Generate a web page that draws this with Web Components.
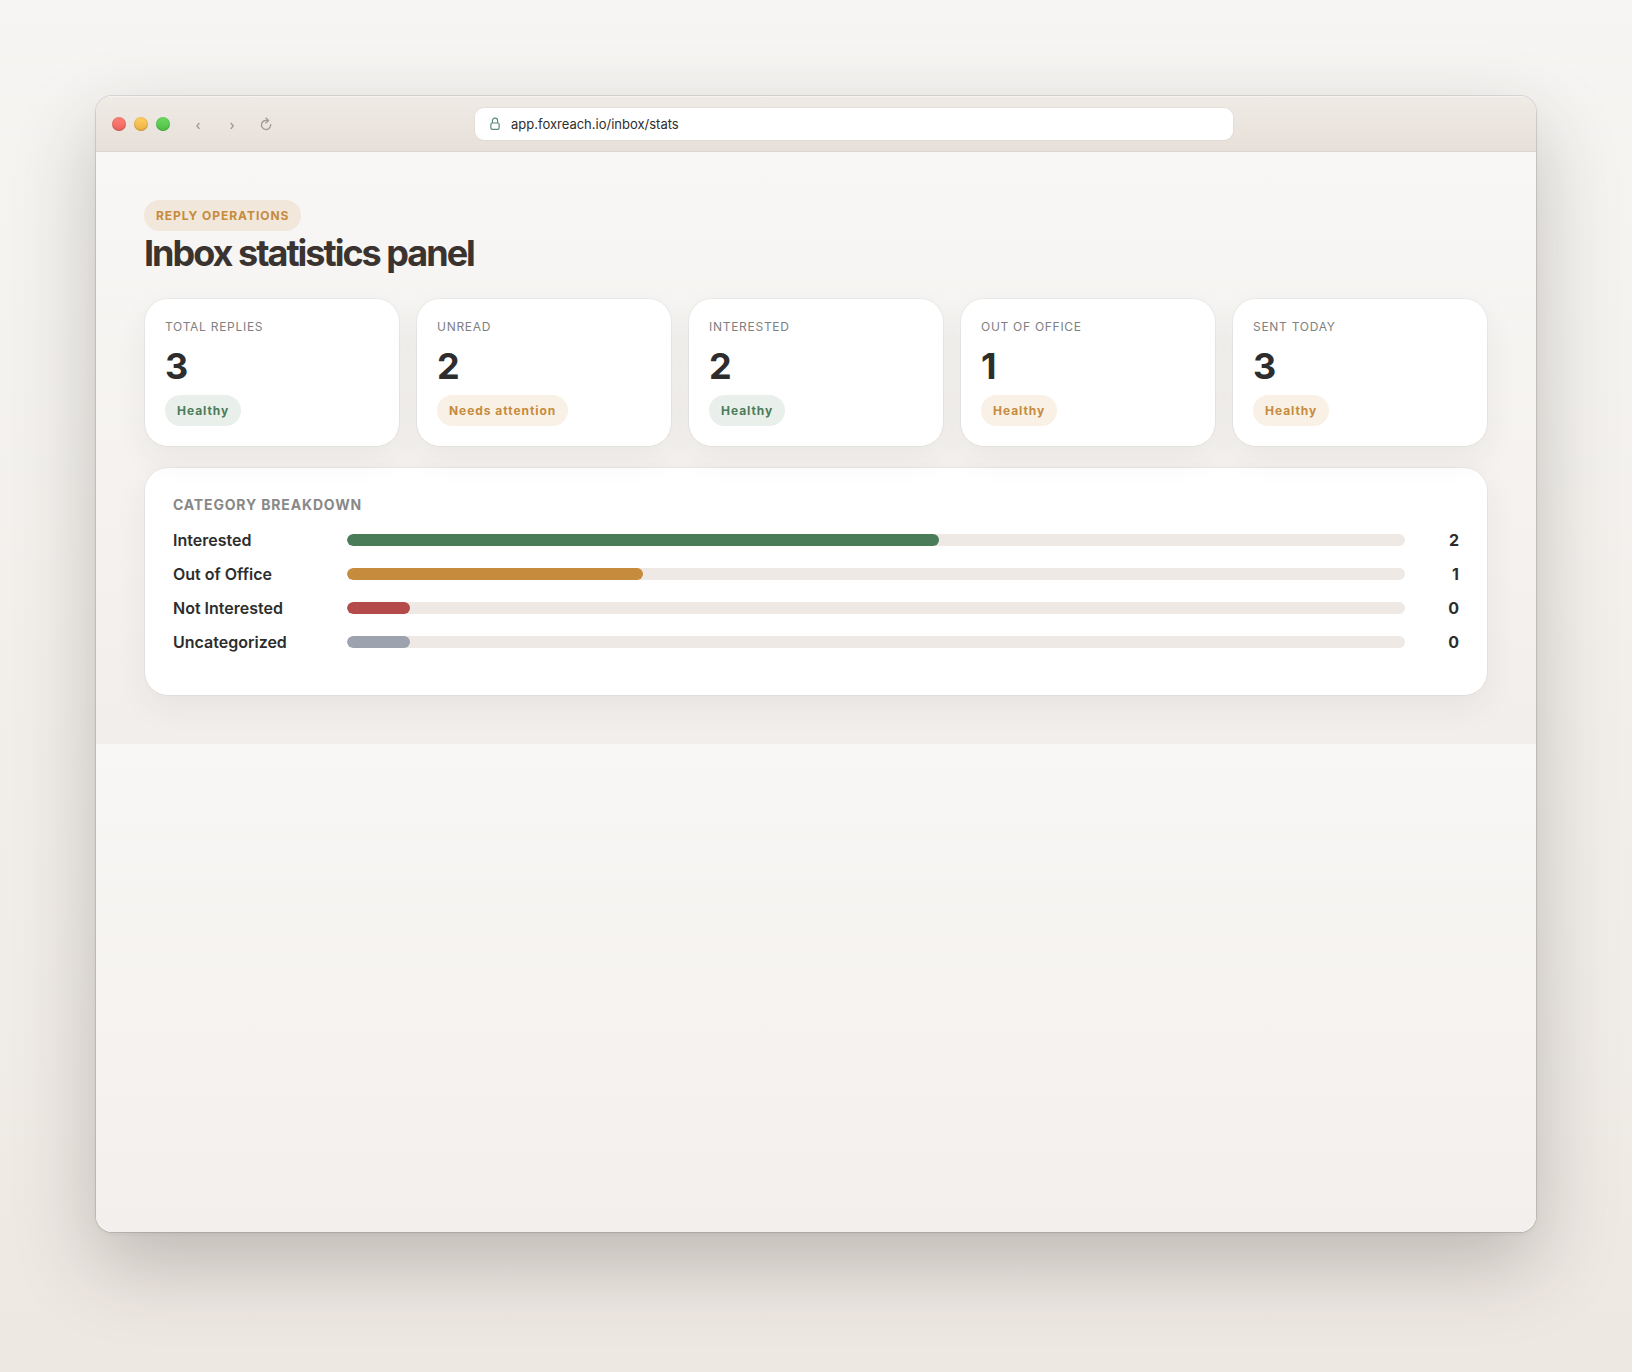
<!DOCTYPE html>
<html lang="en">
<head>
<meta charset="utf-8">
<meta name="viewport" content="width=device-width, initial-scale=1">
<title>Inbox statistics panel</title>
<style>
  * {
    box-sizing: border-box;
  }
  body {
    margin: 0;
    min-height: 100vh;
    display: flex;
    padding: 96px 96px 140px;
    font-family: Inter, "Liberation Sans", sans-serif;
    color: #2d2d2d;
    background: linear-gradient(180deg, #f6f5f3 0%, #f2efeb 50%, #ede8e1 100%);
  }
</style>
</head>
<body>
<browser-window address="app.foxreach.io/inbox/stats">
  <stats-page heading="Inbox statistics panel" tag="Reply operations">
    <stat-card slot="cards" label="Total replies" value="3"><status-pill tone="good">Healthy</status-pill></stat-card>
    <stat-card slot="cards" label="Unread" value="2"><status-pill tone="warn">Needs attention</status-pill></stat-card>
    <stat-card slot="cards" label="Interested" value="2"><status-pill tone="good">Healthy</status-pill></stat-card>
    <stat-card slot="cards" label="Out of office" value="1"><status-pill tone="warn">Healthy</status-pill></stat-card>
    <stat-card slot="cards" label="Sent today" value="3"><status-pill tone="warn">Healthy</status-pill></stat-card>
    <breakdown-panel heading="Category breakdown">
      <breakdown-row label="Interested" value="2" percent="56" color="#4a7c59"></breakdown-row>
      <breakdown-row label="Out of Office" value="1" percent="28" color="#c68b3c"></breakdown-row>
      <breakdown-row label="Not Interested" value="0" percent="6" color="#b54a4a"></breakdown-row>
      <breakdown-row label="Uncategorized" value="0" percent="6" color="#9ca3af"></breakdown-row>
    </breakdown-panel>
  </stats-page>
</browser-window>

<script>
function makeTemplate(html) {
  const template = document.createElement('template');
  template.innerHTML = html;
  return template;
}

function attach(element, template) {
  element.attachShadow({ mode: 'open' });
  element.shadowRoot.appendChild(template.content.cloneNode(true));
}

const browserWindow = makeTemplate(`
<style>
  * {
    box-sizing: border-box;
  }
  :host {
    flex: 1;
    min-width: 0;
    display: flex;
    flex-direction: column;
    border-radius: 16px;
    overflow: hidden;
    background: #f8f7f5;
    box-shadow: 0 0 0 1px rgba(0, 0, 0, 0.1), 0 2px 4px rgba(0, 0, 0, 0.05), 0 32px 80px rgba(45, 40, 35, 0.25);
  }
  header {
    display: flex;
    align-items: center;
    gap: 14px;
    height: 56px;
    padding: 0 16px;
    border-bottom: 1px solid #d9d5d0;
    background: linear-gradient(180deg, #efebe5, #e7e0d9);
    box-shadow: inset 0 1px 0 rgba(255, 255, 255, 0.4);
  }
  .lights {
    display: flex;
    gap: 8px;
  }
  .lights span {
    width: 14px;
    height: 14px;
    border-radius: 50%;
    box-shadow: inset 0 0 0 1px rgba(0, 0, 0, 0.06), inset 0 -1px 2px rgba(0, 0, 0, 0.12);
  }
  .close { background: linear-gradient(180deg, #ff8279, #ed625b); }
  .minimize { background: linear-gradient(180deg, #ffcf62, #edb041); }
  .zoom { background: linear-gradient(180deg, #6fd863, #4cc043); }
  nav {
    display: flex;
    gap: 6px;
  }
  button {
    display: flex;
    align-items: center;
    justify-content: center;
    width: 28px;
    height: 28px;
    padding: 0;
    border: none;
    background: none;
    color: #a19c96;
    cursor: pointer;
  }
  svg {
    display: block;
    fill: none;
    stroke: currentColor;
  }
  .bar {
    flex: 1;
    min-width: 0;
    display: flex;
    justify-content: center;
  }
  label {
    flex: 1;
    display: flex;
    align-items: center;
    gap: 10px;
    max-width: 760px;
    height: 34px;
    padding: 0 14px;
    border: 1px solid rgba(0, 0, 0, 0.03);
    border-radius: 10px;
    background: #fff;
    background-clip: padding-box;
    color: #5c8a74;
  }
  input {
    flex: 1;
    min-width: 0;
    padding: 0;
    border: none;
    outline: none;
    background: none;
    font: inherit;
    font-size: 13px;
    color: #2d2d2d;
  }
  .end {
    width: 92px;
  }
  .view {
    flex: 1;
    display: flex;
    flex-direction: column;
  }
  .view::after {
    content: "";
    flex: 1;
    background: linear-gradient(180deg, #f8f7f5, #f3efec);
  }
</style>

<header>
  <div class="lights"><span class="close"></span><span class="minimize"></span><span class="zoom"></span></div>
  <nav>
    <button type="button" aria-label="Back">
      <svg width="14" height="14" viewBox="0 0 14 14" stroke-width="1.5"><path d="M8.4 5.9 L6 8.9 L8.4 11.9"/></svg>
    </button>
    <button type="button" aria-label="Forward">
      <svg width="14" height="14" viewBox="0 0 14 14" stroke-width="1.5"><path d="M5.8 5.9 L8.2 8.9 L5.8 11.9"/></svg>
    </button>
    <button type="button" aria-label="Reload">
      <svg width="14" height="14" viewBox="0 0 14 14" stroke-width="1.4"><path d="M11.6 7.2 A4.6 4.6 0 1 1 9.2 3.9"/><path d="M6.8 0.8 L9.5 3.7 L6.4 6.3"/></svg>
    </button>
  </nav>
  <div class="bar">
    <label>
      <svg width="12" height="14" viewBox="0 0 12 14" stroke-width="1.2"><rect x="1.9" y="6" width="8.2" height="6.3" rx="1.4"/><path d="M3.4 6 V3.7 A2.6 2.6 0 0 1 8.6 3.7 V6"/></svg>
      <input type="text" aria-label="Address" spellcheck="false">
    </label>
  </div>
  <div class="end"></div>
</header>
<div class="view"><slot></slot></div>
`);

class BrowserWindow extends HTMLElement {
  constructor() {
    super();
    attach(this, browserWindow);
  }

  connectedCallback() {
    this.shadowRoot.querySelector('input').value = this.getAttribute('address');
  }
}

const statsPage = makeTemplate(`
<style>
  :host {
    display: block;
    padding: 48px;
    background: linear-gradient(180deg, #f8f7f5, #f2eeeb);
  }
  header {
    display: flex;
    flex-direction: column;
    align-items: flex-start;
    margin-bottom: 22px;
  }
  h1 {
    margin: 0;
    font-size: 36px;
    line-height: 45px;
    font-weight: 700;
    letter-spacing: -2px;
    color: #3a3330;
  }
  status-pill {
    text-transform: uppercase;
  }
  .cards {
    display: grid;
    grid-template-columns: repeat(5, minmax(0, 1fr));
    gap: 16px;
    margin-bottom: 20px;
  }
</style>

<header>
  <status-pill tone="brand"></status-pill>
  <h1></h1>
</header>
<section class="cards"><slot name="cards"></slot></section>
<slot></slot>
`);

class StatsPage extends HTMLElement {
  constructor() {
    super();
    attach(this, statsPage);
  }

  connectedCallback() {
    this.shadowRoot.querySelector('status-pill').textContent = this.getAttribute('tag');
    this.shadowRoot.querySelector('h1').textContent = this.getAttribute('heading');
  }
}

const statusPill = makeTemplate(`
<style>
  :host {
    display: inline-block;
    padding: 8px 12px;
    border-radius: 16px;
    font-size: 12px;
    line-height: 15px;
    font-weight: 700;
    letter-spacing: 0.08em;
    color: #c68b3c;
    background: #f9f0e6;
  }
  :host([tone="good"]) {
    color: #4a7c59;
    background: #e9efeb;
  }
  :host([tone="brand"]) {
    background: #f1e7da;
  }
</style>
<slot></slot>
`);

class StatusPill extends HTMLElement {
  constructor() {
    super();
    attach(this, statusPill);
  }
}

const statCard = makeTemplate(`
<style>
  :host {
    display: flex;
    flex-direction: column;
    align-items: flex-start;
    padding: 20px;
    border: 1px solid rgba(0, 0, 0, 0.04);
    border-radius: 24px;
    background: #fff;
    background-clip: padding-box;
    box-shadow: 0 12px 32px rgba(45, 45, 45, 0.06);
  }
  .label {
    font-size: 12px;
    line-height: 15px;
    letter-spacing: 0.06em;
    text-transform: uppercase;
    color: #808080;
  }
  .value {
    margin: 10px 0 6px;
    font-size: 36px;
    line-height: 45px;
    font-weight: 700;
  }
</style>
<div class="label"></div>
<div class="value"></div>
<slot></slot>
`);

class StatCard extends HTMLElement {
  constructor() {
    super();
    attach(this, statCard);
  }

  connectedCallback() {
    this.shadowRoot.querySelector('.label').textContent = this.getAttribute('label');
    this.shadowRoot.querySelector('.value').textContent = this.getAttribute('value');
  }
}

const breakdownPanel = makeTemplate(`
<style>
  :host {
    display: block;
    padding: 28px 28px 29px;
    border: 1px solid rgba(0, 0, 0, 0.04);
    border-radius: 24px;
    background: #fff;
    background-clip: padding-box;
    box-shadow: 0 12px 32px rgba(45, 45, 45, 0.06);
  }
  h2 {
    margin: 0 0 16px;
    font-size: 14px;
    line-height: 18px;
    font-weight: 700;
    letter-spacing: 0.06em;
    text-transform: uppercase;
    color: #888;
  }
</style>
<h2></h2>
<slot></slot>
`);

class BreakdownPanel extends HTMLElement {
  constructor() {
    super();
    attach(this, breakdownPanel);
  }

  connectedCallback() {
    this.shadowRoot.querySelector('h2').textContent = this.getAttribute('heading');
  }
}

const breakdownRow = makeTemplate(`
<style>
  :host {
    display: grid;
    grid-template-columns: 160px 1fr 40px;
    align-items: center;
    gap: 14px;
    margin-bottom: 14px;
    font-size: 16px;
    line-height: 20px;
    font-weight: 600;
  }
  .track {
    height: 12px;
    border-radius: 6px;
    overflow: hidden;
    background: #eee9e4;
  }
  .fill {
    height: 100%;
    border-radius: 6px;
  }
  .count {
    text-align: right;
    font-weight: 700;
  }
</style>
<span class="name"></span>
<div class="track"><div class="fill"></div></div>
<span class="count"></span>
`);

class BreakdownRow extends HTMLElement {
  constructor() {
    super();
    attach(this, breakdownRow);
  }

  connectedCallback() {
    const fill = this.shadowRoot.querySelector('.fill');
    fill.style.width = this.getAttribute('percent') + '%';
    fill.style.background = this.getAttribute('color');
    this.shadowRoot.querySelector('.name').textContent = this.getAttribute('label');
    this.shadowRoot.querySelector('.count').textContent = this.getAttribute('value');
  }
}

window.customElements.define('browser-window', BrowserWindow);
window.customElements.define('stats-page', StatsPage);
window.customElements.define('status-pill', StatusPill);
window.customElements.define('stat-card', StatCard);
window.customElements.define('breakdown-panel', BreakdownPanel);
window.customElements.define('breakdown-row', BreakdownRow);
</script>
</body>
</html>
